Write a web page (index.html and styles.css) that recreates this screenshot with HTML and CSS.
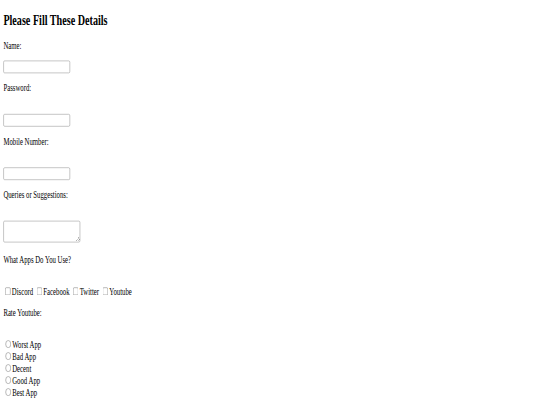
FILE: index.html
```html
<!DOCTYPE html>
<html>
<head>
<meta charset="utf-8">
<link rel="stylesheet" href="styles.css">
</head>
<body>
<div class="viewport">
  <div class="page">
    <h2 class="title">Please Fill These Details</h2>
    <form class="form">
      <p class="label">Name:</p>
      <input class="field" type="text">
      <p class="label">Password:</p><br>
      <input class="field" type="password">
      <p class="label">Mobile Number:</p><br>
      <input class="field" type="text">
      <p class="label">Queries or Suggestions:</p><br>
      <textarea class="area"></textarea>
      <p class="label">What Apps Do You Use?</p><br>
      <label><input type="checkbox">Discord</label>
      <label><input type="checkbox">Facebook</label>
      <label><input type="checkbox">Twitter</label>
      <label><input type="checkbox">Youtube</label>
      <p class="label">Rate Youtube:</p><br>
      <label><input type="radio" name="rate">Worst App</label><br>
      <label><input type="radio" name="rate">Bad App</label><br>
      <label><input type="radio" name="rate">Decent</label><br>
      <label><input type="radio" name="rate">Good App</label><br>
      <label><input type="radio" name="rate">Best App</label>
    </form>
  </div>
</div>
</body>
</html>
```

FILE: styles.css
```css
html, body {
  margin: 0;
  padding: 0;
  background: #ffffff;
}
.viewport {
  width: 540px;
  height: 405px;
  overflow: hidden;
}
.page {
  display: flow-root;
  width: 1264px;
  padding: 0 8px;
  font-family: "Liberation Serif", "Times New Roman", serif;
  font-size: 16px;
  color: #000000;
  transform: scale(0.421875, 0.6);
  transform-origin: 0 0;
}
.title {
  font-size: 24px;
  font-weight: bold;
  margin: 19.92px 0;
}
.label {
  margin: 16px 0;
}
.form {
  margin: 0;
}
.field {
  box-sizing: border-box;
  width: 158px;
  height: 21px;
  border: 1px solid #8f8f8f;
  border-radius: 3px;
  background: #ffffff;
}
.area {
  border: 1px solid #8f8f8f;
  border-radius: 3px;
  background: #ffffff;
}
```
